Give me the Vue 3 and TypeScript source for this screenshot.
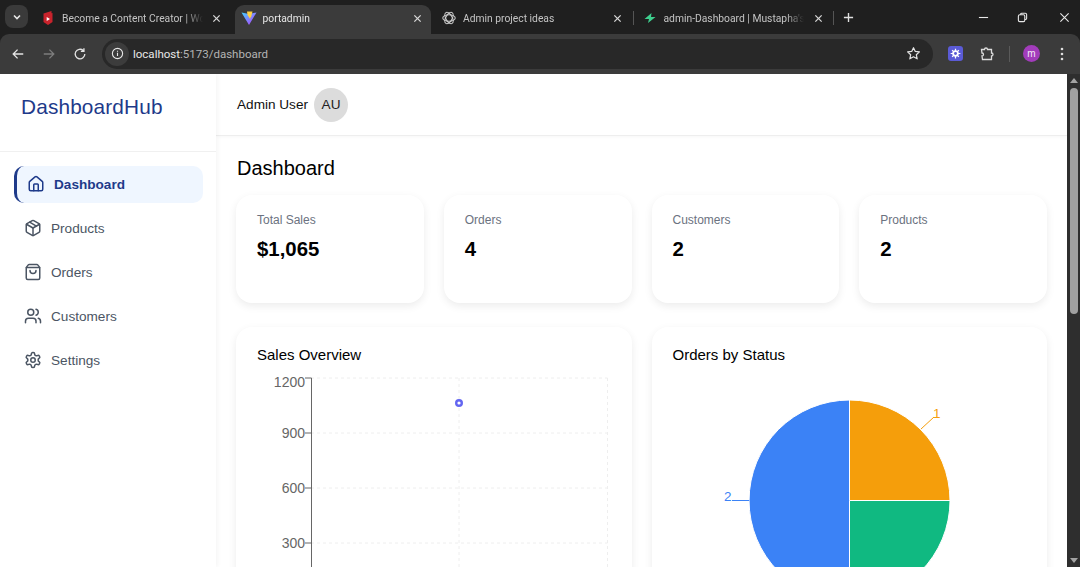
<script setup lang="ts">
interface NavItem { label: string; active?: boolean; paths: string[] }
const nav: NavItem[] = [
  { label: 'Dashboard', active: true, paths: ['M15 21v-8a1 1 0 0 0-1-1h-4a1 1 0 0 0-1 1v8', 'M3 10a2 2 0 0 1 .709-1.528l7-5.999a2 2 0 0 1 2.582 0l7 5.999A2 2 0 0 1 21 10v9a2 2 0 0 1-2 2H5a2 2 0 0 1-2-2z'] },
  { label: 'Products', paths: ['M11 21.73a2 2 0 0 0 2 0l7-4A2 2 0 0 0 21 16V8a2 2 0 0 0-1-1.73l-7-4a2 2 0 0 0-2 0l-7 4A2 2 0 0 0 3 8v8a2 2 0 0 0 1 1.73z', 'M12 22V12', 'm3.3 7 8.7 5 8.7-5', 'm7.5 4.27 9 5.15'] },
  { label: 'Orders', paths: ['M16 10a4 4 0 0 1-8 0', 'M3.103 6.034h17.794', 'M3.4 5.467a2 2 0 0 0-.4 1.2V20a2 2 0 0 0 2 2h14a2 2 0 0 0 2-2V6.667a2 2 0 0 0-.4-1.2l-2-2.667A2 2 0 0 0 17 2H7a2 2 0 0 0-1.6.8z'] },
  { label: 'Customers', paths: ['M16 21v-2a4 4 0 0 0-4-4H6a4 4 0 0 0-4 4v2', 'M13 7a4 4 0 1 1-8 0 4 4 0 0 1 8 0', 'M22 21v-2a4 4 0 0 0-3-3.87', 'M16 3.13a4 4 0 0 1 0 7.75'] },
  { label: 'Settings', paths: ['M12.22 2h-.44a2 2 0 0 0-2 2v.18a2 2 0 0 1-1 1.73l-.43.25a2 2 0 0 1-2 0l-.15-.08a2 2 0 0 0-2.73.73l-.22.38a2 2 0 0 0 .73 2.73l.15.1a2 2 0 0 1 1 1.72v.51a2 2 0 0 1-1 1.74l-.15.09a2 2 0 0 0-.73 2.73l.22.38a2 2 0 0 0 2.73.73l.15-.08a2 2 0 0 1 2 0l.43.25a2 2 0 0 1 1 1.73V20a2 2 0 0 0 2 2h.44a2 2 0 0 0 2-2v-.18a2 2 0 0 1 1-1.73l.43-.25a2 2 0 0 1 2 0l.15.08a2 2 0 0 0 2.73-.73l.22-.39a2 2 0 0 0-.73-2.73l-.15-.08a2 2 0 0 1-1-1.74v-.5a2 2 0 0 1 1-1.74l.15-.09a2 2 0 0 0 .73-2.73l-.22-.38a2 2 0 0 0-2.73-.73l-.15.08a2 2 0 0 1-2 0l-.43-.25a2 2 0 0 1-1-1.73V4a2 2 0 0 0-2-2z', 'M15 12a3 3 0 1 1-6 0 3 3 0 0 1 6 0'] },
]
const stats = [
  { label: 'Total Sales', value: '$1,065' },
  { label: 'Orders', value: '4' },
  { label: 'Customers', value: '2' },
  { label: 'Products', value: '2' },
]
const ticks = [
  { y: 378, labelY: 387, label: '1200' },
  { y: 433, labelY: 438, label: '900' },
  { y: 488, labelY: 493, label: '600' },
  { y: 543, labelY: 548, label: '300' },
]
</script>

<template>
  <div class="window">
    <div class="tabstrip">
      <button class="caret" aria-label="Search tabs">
        <svg width="10" height="10" viewBox="0 0 10 10"><path d="M2 3.500 5 6.500 8 3.500" fill="none" stroke="#e8e8e8" stroke-width="1.600" /></svg>
      </button>
      <div class="tab">
        <svg class="fav" viewBox="0 0 16 16">
          <path d="M3.500 3.500 11.500 1v2.200L12.500 3v9L8 15l-4.500-3z" fill="#c8232c" />
          <path d="M6.700 7v4l3.300-2z" fill="#fff" />
        </svg>
        <span class="tab-title">Become a Content Creator | Wo</span>
        <svg class="close" viewBox="0 0 10 10"><path d="M1.500 1.500 8.500 8.500M8.500 1.500 1.500 8.500" /></svg>
      </div>
      <div class="tab active">
        <svg class="fav" viewBox="0 0 16 16">
          <defs>
            <linearGradient id="vite" x1="0" y1="0" x2="1" y2="1">
              <stop offset="0" stop-color="#41d1ff" />
              <stop offset="1" stop-color="#bd34fe" />
            </linearGradient>
          </defs>
          <path d="M.5 2.500 8 15 15.500 2.500 8 4z" fill="url(#vite)" />
          <path d="M6 1.500h5.500L10 7.500l-1 .1.400 1.900L6.500 5z" fill="#ffcf3f" />
        </svg>
        <span class="tab-title">portadmin</span>
        <svg class="close" viewBox="0 0 10 10"><path d="M1.500 1.500 8.500 8.500M8.500 1.500 1.500 8.500" /></svg>
      </div>
      <div class="tab sep">
        <svg class="fav" viewBox="0 0 16 16" fill="none" stroke="#cfcfcf" stroke-width="1.100">
          <ellipse cx="8" cy="8" rx="6.200" ry="3.200" />
          <ellipse cx="8" cy="8" rx="6.200" ry="3.200" transform="rotate(60 8 8)" />
          <ellipse cx="8" cy="8" rx="6.200" ry="3.200" transform="rotate(120 8 8)" />
        </svg>
        <span class="tab-title">Admin project ideas</span>
        <svg class="close" viewBox="0 0 10 10"><path d="M1.500 1.500 8.500 8.500M8.500 1.500 1.500 8.500" /></svg>
      </div>
      <div class="tab sep">
        <svg class="fav" viewBox="0 0 16 16"><path d="M9.500 3 2.500 9H7L6 13 13.500 7H9z" fill="#3ecf8e" /></svg>
        <span class="tab-title">admin-Dashboard | Mustapha's</span>
        <svg class="close" viewBox="0 0 10 10"><path d="M1.500 1.500 8.500 8.500M8.500 1.500 1.500 8.500" /></svg>
      </div>
      <svg class="plus" viewBox="0 0 12 12"><path d="M6 1v10M1 6h10" /></svg>
      <div class="win-controls">
        <svg viewBox="0 0 12 12"><path d="M1 6h10" /></svg>
        <svg class="restore" viewBox="0 0 12 12"><rect x="1.500" y="3" width="7" height="7.500" rx="1.500" /><path d="M4 3V2.500A1.200 1.200 0 0 1 5.200 1.300H9A1.500 1.500 0 0 1 10.500 2.800V7.200A1 1 0 0 1 9.500 8.200H8.500" /></svg>
        <svg viewBox="0 0 12 12"><path d="M1.500 1.500 10.500 10.500M10.500 1.500 1.500 10.500" /></svg>
      </div>
    </div>

    <div class="toolbar">
      <svg class="nav-ic" viewBox="0 0 16 16"><path d="M14 8H2.500M7.500 3 2.500 8l5 5" /></svg>
      <svg class="nav-ic dim" viewBox="0 0 16 16"><path d="M2 8h11.500M8.500 3l5 5-5 5" /></svg>
      <svg class="nav-ic" viewBox="0 0 16 16"><path d="M13.500 8A5.500 5.500 0 1 1 11.700 4M12.500 1.500V5H9" /></svg>
      <div class="omnibox">
        <span class="info">
          <svg viewBox="0 0 14 14"><circle cx="7" cy="7" r="5.500" /><path d="M7 6.300v3.500M7 4v1" /></svg>
        </span>
        <span class="url">localhost<span class="url-dim">:5173/dashboard</span></span>
        <svg class="star" viewBox="0 0 16 16"><path d="m8 1.800 1.900 4 4.400.5-3.300 3 .9 4.400L8 11.500l-3.900 2.200.9-4.400-3.300-3 4.400-.5z" /></svg>
      </div>
      <div class="ext-blue">
        <svg viewBox="0 0 16 16">
          <circle cx="8" cy="8" r="4" fill="#fff" />
          <path d="M8 2v12M2 8h12M3.800 3.800l8.400 8.400M12.200 3.800l-8.400 8.400" stroke="#fff" stroke-width="1.500" />
          <circle cx="8" cy="8" r="1.800" fill="#5b5bd6" />
        </svg>
      </div>
      <svg class="puzzle" viewBox="0 0 16 16"><path d="M2.500 3.500h3a1.500 1.500 0 0 1 3 0h4v3.500a1.500 1.500 0 0 1 0 3V13.500H3.500L3 10a1.500 1.500 0 0 0 0-3z" /></svg>
      <span class="tool-sep"></span>
      <span class="profile">m</span>
      <svg class="dots" viewBox="0 0 4 14"><circle cx="2" cy="2" r="1.300" /><circle cx="2" cy="7" r="1.300" /><circle cx="2" cy="12" r="1.300" /></svg>
    </div>

    <div class="viewport">
      <aside class="sidebar">
        <div class="logo">DashboardHub</div>
        <nav class="nav">
          <a v-for="item in nav" :key="item.label" class="nav-item" :class="{ on: item.active }">
            <svg class="nav-icon" viewBox="0 0 24 24"><path v-for="d in item.paths" :key="d" :d="d" /></svg>
            <span>{{ item.label }}</span>
          </a>
        </nav>
      </aside>

      <div class="content">
        <header class="topbar">
          <span class="user">Admin User</span>
          <span class="avatar">AU</span>
        </header>
        <main class="main">
          <h1 class="page-title">Dashboard</h1>
          <section class="stats">
            <div v-for="s in stats" :key="s.label" class="card stat">
              <div class="stat-label">{{ s.label }}</div>
              <div class="stat-value">{{ s.value }}</div>
            </div>
          </section>
          <section class="charts">
            <div class="card chart">
              <h2 class="chart-title">Sales Overview</h2>
              <svg class="plot" viewBox="257 372 354 300">
                <g class="grid">
                  <line v-for="t in ticks" :key="t.y" x1="311" x2="607.500" :y1="t.y" :y2="t.y" />
                  <line x1="459" x2="459" y1="378" y2="672" />
                  <line x1="607.500" x2="607.500" y1="378" y2="672" />
                </g>
                <line class="axis" x1="311.500" x2="311.500" y1="378" y2="672" />
                <g v-for="t in ticks" :key="t.label">
                  <line class="axis" x1="305" x2="311.500" :y1="t.y" :y2="t.y" />
                  <text class="tick" x="305" :y="t.labelY" text-anchor="end">{{ t.label }}</text>
                </g>
                <circle cx="459" cy="403" r="2.800" fill="#fff" stroke="#6366f1" stroke-width="2.400" />
              </svg>
            </div>
            <div class="card chart">
              <h2 class="chart-title">Orders by Status</h2>
              <svg class="plot" viewBox="673 372 354 300">
                <path d="M849.500 500.500V400A100.500 100.500 0 0 1 950 500.500z" fill="#f59e0b" stroke="#fff" />
                <path d="M849.500 500.500H950A100.500 100.500 0 0 1 849.500 601z" fill="#10b981" stroke="#fff" />
                <path d="M849.500 500.500V601A100.500 100.500 0 0 1 849.500 400z" fill="#3b82f6" stroke="#fff" />
                <path d="M921 429 934 417" stroke="#f59e0b" fill="none" />
                <text class="pie-label" x="933" y="418" fill="#f59e0b">1</text>
                <path d="M749 500.500H732" stroke="#3b82f6" fill="none" />
                <text class="pie-label" x="724" y="501" fill="#3b82f6">2</text>
              </svg>
            </div>
          </section>
        </main>
      </div>

      <div class="scrollbar">
        <span class="arrow up"></span>
        <span class="thumb"></span>
        <span class="arrow down"></span>
      </div>
    </div>
  </div>
</template>

<style>
html, body { margin: 0; height: 100%; overflow: hidden; background: #fff; }
</style>

<style scoped>
.window {
  width: 1080px;
  height: 567px;
  display: flex;
  flex-direction: column;
  overflow: hidden;
  background: #1f1f1f;
  font-family: "Liberation Sans", Arial, sans-serif;
}

/* Browser chrome */
.tabstrip {
  height: 34px;
  flex: none;
  display: flex;
  align-items: flex-end;
  box-sizing: border-box;
  padding-left: 5px;
  font-family: Roboto, "Open Sans", sans-serif;
}
.caret {
  width: 23px;
  height: 23px;
  margin: 0 4px 6px 0;
  padding: 0;
  flex: none;
  display: grid;
  place-items: center;
  border: 0;
  border-radius: 8px;
  background: #3a3a3a;
}
.tab {
  position: relative;
  width: 200.500px;
  height: 29px;
  flex: none;
  box-sizing: border-box;
  padding: 0 8px 3px;
  display: flex;
  align-items: center;
  gap: 6px;
  color: #c4c4c4;
  font-size: 10.300px;
}
.tab.active { color: #e6e6e6; }
.tab.active::before {
  content: "";
  position: absolute;
  inset: 0 2px 0 2px;
  border-radius: 9px 9px 0 0;
  background: #3b3b3b;
}
.tab.sep::after {
  content: "";
  position: absolute;
  right: 0;
  top: 6px;
  height: 14px;
  width: 1px;
  background: #555;
}
.tab > * { position: relative; }
.fav { width: 16px; height: 16px; flex: none; }
.tab-title {
  flex: 1;
  min-width: 0;
  white-space: nowrap;
  -webkit-mask-image: linear-gradient(90deg, #000 calc(100% - 18px), transparent 100%);
  mask-image: linear-gradient(90deg, #000 calc(100% - 18px), transparent 100%);
}
.close {
  width: 9px;
  height: 9px;
  margin: 0 3.500px;
  flex: none;
  fill: none;
  stroke: #d8d8d8;
  stroke-width: 1.400;
}
.plus {
  width: 11px;
  height: 11px;
  margin: 0 0 11px 9px;
  flex: none;
  fill: none;
  stroke: #e0e0e0;
  stroke-width: 1.500;
}
.win-controls {
  margin-left: auto;
  align-self: stretch;
  display: flex;
  align-items: center;
  gap: 28px;
  padding-right: 10px;
}
.win-controls .restore { margin-right: 3px; }
.win-controls svg {
  width: 11px;
  height: 11px;
  fill: none;
  stroke: #e8e8e8;
  stroke-width: 1.200;
}
.toolbar {
  height: 40px;
  flex: none;
  display: flex;
  align-items: center;
  box-sizing: border-box;
  padding: 0 0 1px 11px;
  background: #3b3b3b;
  border-radius: 9px 9px 0 0;
}
.nav-ic {
  width: 14px;
  height: 14px;
  margin-right: 17px;
  flex: none;
  fill: none;
  stroke: #e3e3e3;
  stroke-width: 1.500;
}
.nav-ic.dim { stroke: #7d7d7d; }
.omnibox {
  width: 831px;
  height: 30px;
  margin-left: -2px;
  flex: none;
  box-sizing: border-box;
  padding: 0 12px 0 3px;
  display: flex;
  align-items: center;
  border-radius: 15px;
  background: #282828;
  font-family: Roboto, "Open Sans", sans-serif;
}
.info {
  width: 24px;
  height: 24px;
  flex: none;
  display: grid;
  place-items: center;
  border-radius: 50%;
  background: #3c3c3c;
}
.info svg {
  width: 13px;
  height: 13px;
  fill: none;
  stroke: #e6e6e6;
  stroke-width: 1.200;
}
.url { margin-left: 4px; color: #e8e8e8; font-size: 11.500px; }
.url-dim { color: #b4b4b4; }
.star {
  width: 15px;
  height: 15px;
  margin-left: auto;
  fill: none;
  stroke: #e3e3e3;
  stroke-width: 1.300;
  stroke-linejoin: round;
}
.ext-blue {
  width: 15px;
  height: 15px;
  margin-left: 15px;
  flex: none;
  display: grid;
  place-items: center;
  border-radius: 3px;
  background: #5b5bd6;
}
.ext-blue svg { width: 13px; height: 13px; }
.puzzle {
  width: 16px;
  height: 16px;
  margin-left: 16px;
  flex: none;
  fill: none;
  stroke: #dcdcdc;
  stroke-width: 1.300;
}
.tool-sep {
  width: 1px;
  height: 16px;
  margin-left: 14px;
  flex: none;
  background: #5a5a5a;
}
.profile {
  width: 17px;
  height: 17px;
  margin-left: 13px;
  flex: none;
  display: grid;
  place-items: center;
  border-radius: 50%;
  background: #a23cbb;
  color: #f3e6f6;
  font-size: 10px;
  line-height: 1;
}
.dots {
  width: 4px;
  height: 14px;
  margin-left: 20px;
  flex: none;
  fill: #dedede;
}

/* Page */
.viewport {
  flex: 1;
  min-height: 0;
  display: flex;
  background: #fff;
  overflow: hidden;
}
.sidebar {
  position: relative;
  z-index: 1;
  width: 216px;
  flex: none;
  background: #fff;
  box-shadow: 2px 0 4px rgba(0, 0, 0, 0.04);
}
.logo {
  height: 78px;
  box-sizing: border-box;
  padding: 21px 21px 0;
  border-bottom: 1px solid #f0f0f0;
  color: #1e3a8a;
  font-size: 20.800px;
  line-height: 24px;
  letter-spacing: 0.15px;
}
.nav {
  padding: 13.500px 13px 0 14px;
  display: flex;
  flex-direction: column;
  gap: 7px;
}
.nav-item {
  height: 37px;
  box-sizing: border-box;
  padding: 0 10px;
  display: flex;
  align-items: center;
  gap: 9px;
  border-radius: 10px;
  color: #4b5563;
  font-size: 13.600px;
}
.nav-item.on {
  border-left: 3px solid #1e3a8a;
  background: #eff6ff;
  color: #1e3a8a;
  font-weight: 700;
}
.nav-icon {
  width: 18px;
  height: 18px;
  flex: none;
  fill: none;
  stroke: currentColor;
  stroke-width: 2;
  stroke-linecap: round;
  stroke-linejoin: round;
}
.content { flex: 1; min-width: 0; overflow: hidden; }
.topbar {
  height: 62px;
  box-sizing: border-box;
  padding: 0 21px;
  display: flex;
  align-items: center;
  gap: 6px;
  border-bottom: 1px solid #eee;
  box-shadow: 0 1px 3px rgba(0, 0, 0, 0.03);
  color: #111;
  font-size: 13.600px;
}
.avatar {
  width: 34px;
  height: 34px;
  display: grid;
  place-items: center;
  border-radius: 50%;
  background: #dcdcdc;
  color: #222;
  font-size: 13.600px;
}
.main { padding: 21px 20px 0; }
.page-title {
  margin: 0 0 15px 1px;
  color: #000;
  font-size: 20px;
  font-weight: 400;
  line-height: 23px;
}
.stats {
  display: grid;
  grid-template-columns: repeat(4, minmax(0, 1fr));
  gap: 20px;
}
.card {
  box-sizing: border-box;
  padding: 20px 20px 20px 21px;
  border-radius: 16px;
  background: #fff;
  box-shadow: 0 3px 8px rgba(0, 0, 0, 0.08);
}
.stat { height: 108px; padding-top: 19px; }
.stat-label {
  color: #6b7280;
  font-size: 12px;
  line-height: 13px;
}
.stat-value {
  margin-top: 10px;
  color: #000;
  font-size: 20.400px;
  font-weight: 700;
  line-height: 24px;
}
.charts {
  margin-top: 24px;
  display: grid;
  grid-template-columns: repeat(2, minmax(0, 1fr));
  gap: 20px;
}
.chart { height: 400px; padding-top: 19px; }
.chart-title {
  margin: 0;
  color: #000;
  font-size: 15px;
  font-weight: 400;
  line-height: 17px;
}
.plot {
  display: block;
  width: 354px;
  height: 300px;
  margin-top: 9px;
  overflow: visible;
}
.grid line { stroke: #eee; stroke-dasharray: 3 3; }
.axis { stroke: #666; stroke-width: 1; }
.tick {
  fill: #666;
  font-size: 14px;
}
.pie-label { font-size: 13.500px; }

.scrollbar {
  position: relative;
  width: 13px;
  flex: none;
  display: flex;
  flex-direction: column;
  align-items: center;
  background: #2e2e2e;
}
.arrow {
  width: 0;
  height: 0;
  border-left: 4px solid transparent;
  border-right: 4px solid transparent;
}
.arrow.up { margin-top: 4px; border-bottom: 5px solid #a3a3a3; }
.arrow.down { margin-top: auto; margin-bottom: 4px; border-top: 5px solid #a3a3a3; }
.thumb {
  width: 8px;
  height: 226px;
  margin-top: 5px;
  border-radius: 4px;
  background: #a0a0a0;
}
</style>
